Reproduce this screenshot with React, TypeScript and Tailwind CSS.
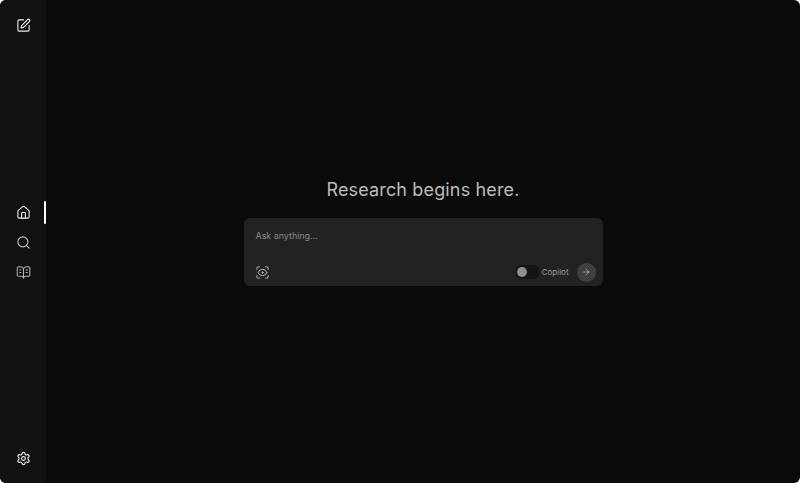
import { SquarePen, House, Search, BookOpenText, Settings, ScanEye, ArrowRight } from "lucide-react";

export default function App() {
  return (
    <div className="h-[483px] w-[800px] overflow-hidden bg-white font-['Inter',sans-serif]">
      <div className="flex h-full w-full overflow-hidden rounded-[6px] bg-[#0a0a0a]">
        <aside className="flex h-full w-[46px] shrink-0 flex-col items-center justify-between bg-[#111111] pb-[17px] pt-[18px]">
          <SquarePen size={15} strokeWidth={1.75} className="text-[#f0f0f0]" />
          <nav className="relative flex w-full flex-col items-center gap-[15px]">
            <House size={15} strokeWidth={1.75} className="text-[#f0f0f0]" />
            <Search size={15} strokeWidth={1.75} className="text-[#c4c4c4]" />
            <BookOpenText size={15} strokeWidth={1.5} className="text-[#c4c4c4]" />
            <span className="absolute right-0 top-[-4px] h-[23px] w-[2px] rounded-full bg-white" />
          </nav>
          <Settings size={15} strokeWidth={1.75} className="text-[#f0f0f0]" />
        </aside>
        <main className="flex flex-1 flex-col items-center justify-center pb-[20px]">
          <h1 className="mb-[16px] text-[18px] font-normal leading-[24px] tracking-[0.15px] text-[#bdbdbd]">Research begins here.</h1>
          <div className="flex h-[68px] w-[359px] flex-col justify-between rounded-[6px] bg-[#222222] pb-[4px] pl-[12px] pr-[7px] pt-[12px]">
            <p className="text-[9px] leading-[12px] tracking-[-0.05px] text-[#8a8a8a]">Ask anything...</p>
            <div className="flex items-center justify-between">
              <ScanEye size={15} strokeWidth={1.5} className="-ml-[1px] text-[#c4c4c4]" />
              <div className="flex items-center">
                <div className="flex h-[14px] w-[25px] items-center rounded-full bg-[#141414] pl-[2px]">
                  <span className="h-[10px] w-[10px] rounded-full bg-[#8f8f8f]" />
                </div>
                <span className="ml-[2px] text-[8px] leading-[12px] text-[#9a9a9a]">Copilot</span>
                <div className="ml-[8px] flex h-[19px] w-[19px] items-center justify-center rounded-full bg-[#404040]">
                  <ArrowRight size={10} strokeWidth={1.5} className="text-[#c4c4c4]" />
                </div>
              </div>
            </div>
          </div>
        </main>
      </div>
    </div>
  );
}
